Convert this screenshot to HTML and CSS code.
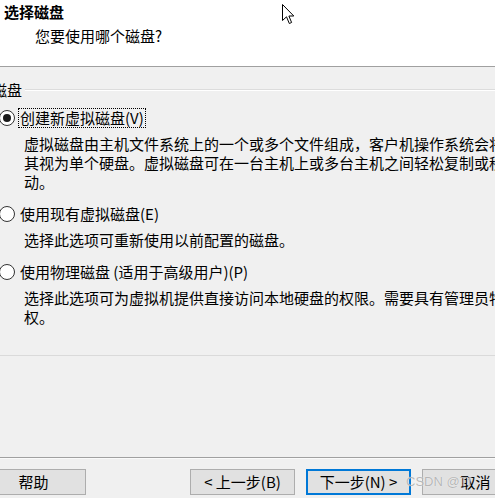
FILE: index.html
```html
<!DOCTYPE html>
<html lang="zh-CN">
<head>
<meta charset="utf-8">
<title>选择磁盘</title>
<link rel="stylesheet" href="styles.css">
</head>
<body>
<div class="window">
  <div class="header">
    <div class="title">选择磁盘</div>
    <div class="subtitle">您要使用哪个磁盘?</div>
    <svg class="cursor" width="13" height="21" viewBox="0 0 13 21">
      <path d="M0.5 0.5 L0.5 16.5 L4.5 12.8 L7.3 19.5 L9.6 18.5 L6.9 12 L11.8 12 Z" fill="#fff" stroke="#000" stroke-width="1" stroke-linejoin="miter"/>
    </svg>
  </div>
  <div class="main">
    <div class="group-head">
      <span class="group-label">磁盘</span>
      <span class="group-line"></span>
    </div>

    <div class="option opt-first">
      <span class="radio checked"><span class="dot"></span></span>
      <span class="label focus">创建新虚拟磁盘(V)</span>
    </div>
    <div class="desc">
      <div class="line">虚拟磁盘由主机文件系统上的一个或多个文件组成，客户机操作系统会将</div>
      <div class="line">其视为单个硬盘。虚拟磁盘可在一台主机上或多台主机之间轻松复制或移</div>
      <div class="line">动。</div>
    </div>

    <div class="option">
      <span class="radio"></span>
      <span class="label">使用现有虚拟磁盘(E)</span>
    </div>
    <div class="desc">
      <div class="line">选择此选项可重新使用以前配置的磁盘。</div>
    </div>

    <div class="option">
      <span class="radio"></span>
      <span class="label">使用物理磁盘 (适用于高级用户)(P)</span>
    </div>
    <div class="desc">
      <div class="line">选择此选项可为虚拟机提供直接访问本地硬盘的权限。需要具有管理员特</div>
      <div class="line">权。</div>
    </div>

    <div class="separator"></div>
    <div class="footer-line"></div>

    <div class="buttons">
      <div class="btn btn-help">帮助</div>
      <div class="btn btn-back">&lt; 上一步(B)</div>
      <div class="btn btn-next">下一步(N) &gt;</div>
      <div class="btn btn-cancel">取消</div>
      <span class="watermark">CSDN @Tf</span>
    </div>
  </div>
</div>
</body>
</html>
```

FILE: styles.css
```css
html, body {
  margin: 0;
  padding: 0;
}
body {
  width: 495px;
  height: 498px;
  overflow: hidden;
  background: #f0f0f0;
  font-family: "Noto Sans CJK SC", "Noto Sans", "Liberation Sans", sans-serif;
  font-size: 15px;
  color: #000;
}
.window {
  width: 495px;
  height: 498px;
  overflow: hidden;
  display: flex;
  flex-direction: column;
}
.header {
  position: relative;
  height: 66px;
  flex: none;
  background: #fff;
  border-bottom: 1px solid #a0a0a0;
}
.title {
  padding: 2px 0 0 4px;
  font-weight: bold;
  line-height: 19px;
}
.subtitle {
  margin-top: 5px;
  padding-left: 35px;
  line-height: 19px;
}
.cursor {
  position: absolute;
  left: 282px;
  top: 4px;
}
.main {
  flex: 1;
  display: flex;
  flex-direction: column;
  background: #f0f0f0;
}
.group-head {
  margin-top: 13px;
  margin-left: -8px;
  display: flex;
  align-items: center;
  height: 19px;
  line-height: 19px;
}
.group-label {
  white-space: nowrap;
}
.group-line {
  flex: 1;
  margin-left: 3px;
  height: 0;
  border-top: 1px solid #dcdcdc;
  border-bottom: 1px solid #fff;
  margin-top: 1px;
}
.option {
  display: flex;
  align-items: center;
  margin-top: 13px;
  height: 20px;
  white-space: nowrap;
}
.option.opt-first {
  margin-top: 9px;
}
.radio {
  flex: none;
  width: 14px;
  height: 14px;
  margin-left: -1px;
  border: 1px solid #333;
  border-radius: 50%;
  background: #fff;
  display: flex;
  align-items: center;
  justify-content: center;
}
.dot {
  width: 8px;
  height: 8px;
  border-radius: 50%;
  background: #1a1a1a;
}
.label {
  margin-left: 3px;
  padding: 0 1px;
  line-height: 18px;
  border: 1px dotted transparent;
}
.label.focus {
  border-color: #000;
}
.desc {
  margin-top: 6px;
  padding-left: 24px;
  line-height: 19px;
  white-space: nowrap;
}
.separator {
  margin-top: 29px;
  height: 0;
  border-top: 1px solid #dadada;
}
.footer-line {
  margin-top: 101px;
  height: 0;
  border-top: 1px solid #a0a0a0;
  border-bottom: 1px solid #fafafa;
}
.buttons {
  position: relative;
  margin-top: 10px;
  display: flex;
  white-space: nowrap;
}
.btn {
  flex: none;
  box-sizing: border-box;
  width: 105px;
  height: 26px;
  line-height: 24px;
  text-align: center;
  background: #e1e1e1;
  border: 1px solid #adadad;
}
.btn-help {
  margin-left: -19px;
}
.btn-back {
  margin-left: 104px;
}
.btn-next {
  margin-left: 11px;
  border: 2px solid #0078d7;
  line-height: 22px;
}
.btn-cancel {
  margin-left: 11px;
  width: 107px;
}
.watermark {
  position: absolute;
  left: 406px;
  top: 5px;
  font-family: "Liberation Sans", sans-serif;
  font-size: 13px;
  line-height: 16px;
  color: rgba(160, 160, 160, 0.75);
  text-shadow: 0 0 1px #fff;
}
```
